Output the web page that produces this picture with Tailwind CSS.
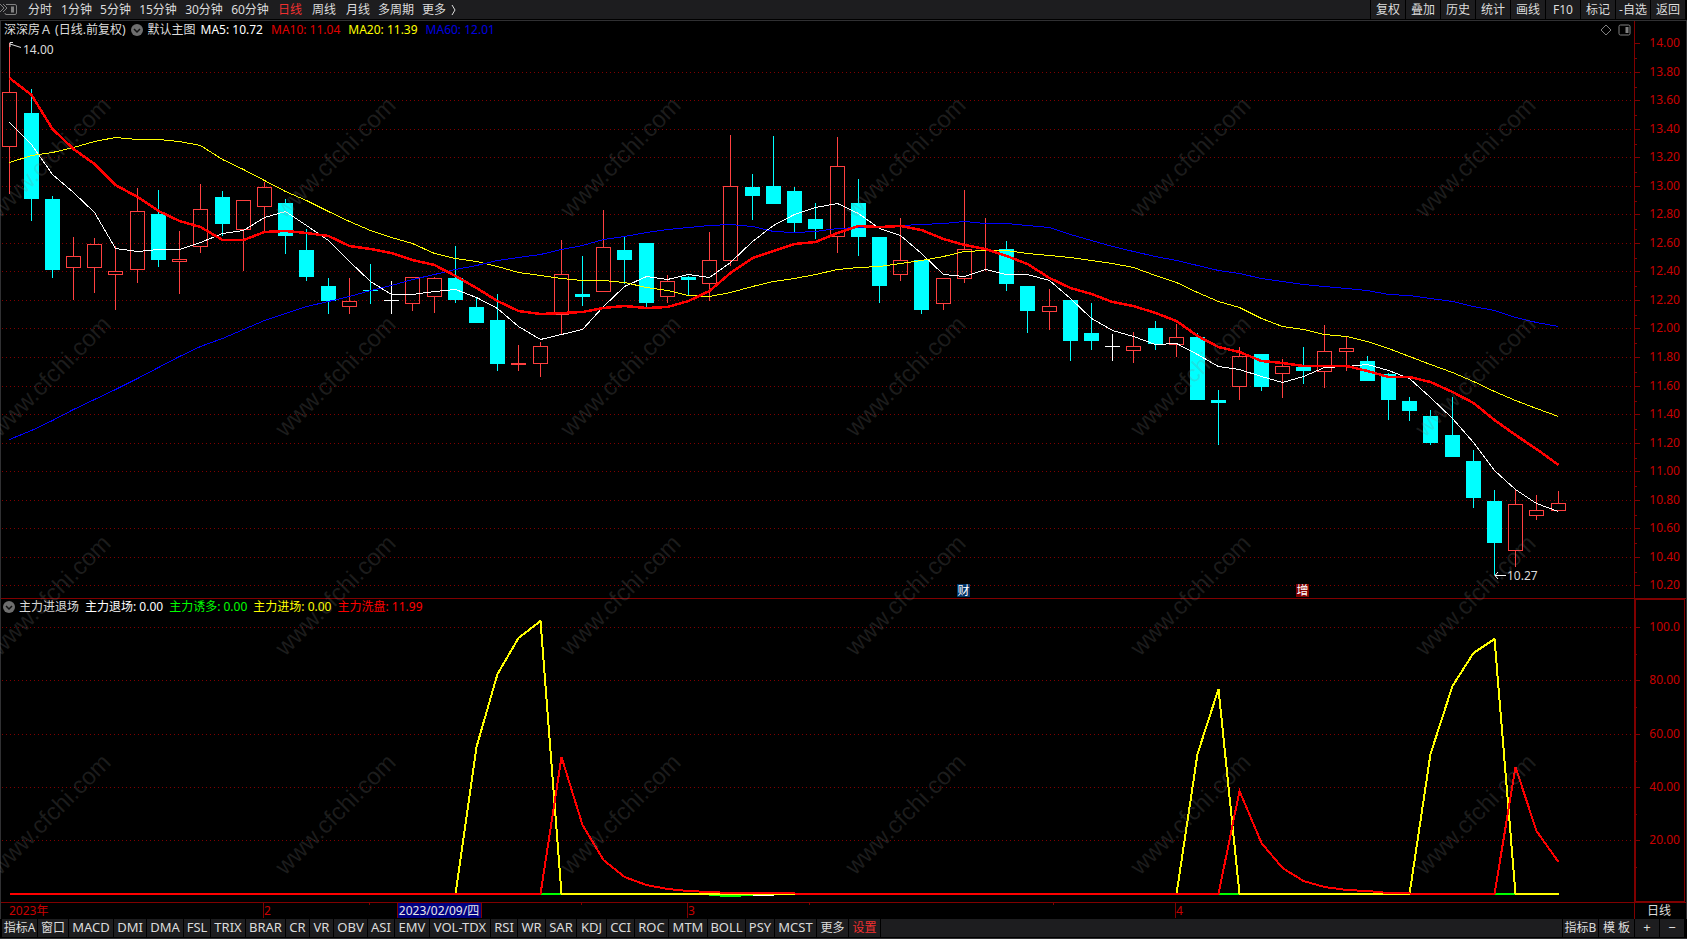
<!DOCTYPE html>
<html lang="zh-CN">
<head>
    <meta charset="UTF-8">
    <meta name="viewport" content="width=device-width, initial-scale=1.0">
    <title>深深房Ａ 日线</title>
    <script src="https://cdn.jsdelivr.net/npm/@tailwindcss/browser@4"></script>
</head>
<body class="relative flex h-screen flex-col overflow-hidden bg-black font-['Noto_Sans','Noto_Sans_CJK_SC',sans-serif] text-xs text-[#dcdcdc]">
    <!-- 顶部工具栏 -->
    <header class="flex h-[21px] shrink-0 justify-between border-b border-[#303032] pb-px">
        <nav class="flex flex-1 items-center bg-[#1d1d1f]">
            <button class="w-[23px]" aria-label="侧栏">
                <svg width="20" height="19" viewBox="0 0 20 19" fill="none" stroke="#808080">
                    <path d="M0 4l4 4-4 4M3 4l4 4-4 4"/>
                    <path d="M6 4.500h9q1.500 0 1.500 1.500v7q0 1.500-1.500 1.500H6q-1 0-1-1.500"/>
                    <path d="M11 6.500h3v6h-3z" fill="#808080" stroke="none"/>
                </svg>
            </button>
            <button class="w-[34px]">分时</button>
            <button class="w-[39px]">1分钟</button>
            <button class="w-[39px]">5分钟</button>
            <button class="w-[46px]">15分钟</button>
            <button class="w-[46px]">30分钟</button>
            <button class="w-[46px]">60分钟</button>
            <button class="w-[34px] text-[#f03030]">日线</button>
            <button class="w-[34px]">周线</button>
            <button class="w-[34px]">月线</button>
            <button class="w-[42px]">多周期</button>
            <button class="w-[34px]">更多</button>
            <svg width="8" height="12" viewBox="0 0 8 12" fill="none" stroke="#dcdcdc"><path d="M1 1l3 5-3 5"/></svg>
        </nav>
        <nav class="mr-[2px] flex gap-px pl-px">
            <button class="w-[34px] bg-[#1d1d1f]">复权</button>
            <button class="w-[34px] bg-[#1d1d1f]">叠加</button>
            <button class="w-[34px] bg-[#1d1d1f]">历史</button>
            <button class="w-[34px] bg-[#1d1d1f]">统计</button>
            <button class="w-[34px] bg-[#1d1d1f]">画线</button>
            <button class="w-[34px] bg-[#1d1d1f]">F10</button>
            <button class="w-[34px] bg-[#1d1d1f]">标记</button>
            <button class="w-[34px] bg-[#1d1d1f]">-自选</button>
            <button class="w-[34px] bg-[#1d1d1f]">返回</button>
        </nav>
    </header>

    <main class="flex min-h-0 flex-1 flex-col border-x border-[#303032]">
        <!-- 主图 -->
        <section class="flex min-h-0 flex-[577_1_0%]">
            <div class="relative min-w-0 flex-1">
                <svg id="price" class="block h-full w-full"></svg>
                <div class="absolute inset-x-0 top-0 flex h-[18px] items-center justify-between pr-[3px] pl-[3px]">
                    <div class="flex items-center gap-[5px] whitespace-nowrap">
                        <span>深深房Ａ (日线.前复权)</span>
                        <button aria-label="主图指标">
                            <svg width="12" height="12" viewBox="0 0 12 12"><circle cx="6" cy="6" r="6" fill="#6e6e6e"/><path d="M3 5l3 3 3-3" fill="none" stroke="#111" stroke-width="1.500"/></svg>
                        </button>
                        <span>默认主图</span>
                        <div class="flex gap-2">
                            <span class="text-white">MA5: 10.72</span>
                            <span class="text-[#e00000]">MA10: 11.04</span>
                            <span class="text-[#ffff00]">MA20: 11.39</span>
                            <span class="text-[#0000e0]">MA60: 12.01</span>
                        </div>
                    </div>
                    <div class="flex items-center gap-[6px]">
                        <svg width="12" height="12" viewBox="0 0 12 12" fill="none" stroke="#808080"><path d="M6 1l5 5-5 5-5-5z"/></svg>
                        <svg width="13" height="12" viewBox="0 0 13 12" fill="none" stroke="#808080"><rect x="1" y="1" width="11" height="10" rx="1.500"/><path d="M7.500 3h3v6h-3z" fill="#808080" stroke="none"/></svg>
                    </div>
                </div>
            </div>
            <svg id="priceAxis" class="block h-full w-[52px] shrink-0 border-l border-[#800000]"></svg>
        </section>

        <!-- 副图 -->
        <section class="flex min-h-0 flex-[303_1_0%] border-t border-[#800000]">
            <div class="relative min-w-0 flex-1">
                <svg id="sub" class="block h-full w-full"></svg>
                <div class="absolute top-0 left-[2px] flex h-4 items-center gap-1 whitespace-nowrap">
                    <button aria-label="副图指标">
                        <svg width="12" height="12" viewBox="0 0 12 12"><circle cx="6" cy="6" r="6" fill="#6e6e6e"/><path d="M3 5l3 3 3-3" fill="none" stroke="#111" stroke-width="1.500"/></svg>
                    </button>
                    <div class="flex gap-[6px]">
                        <span>主力进退场</span>
                        <span class="text-white">主力退场: 0.00</span>
                        <span class="text-[#00ff00]">主力诱多: 0.00</span>
                        <span class="text-[#ffff00]">主力进场: 0.00</span>
                        <span class="text-[#ff0000]">主力洗盘: 11.99</span>
                    </div>
                </div>
            </div>
            <div class="mr-px w-[51px] shrink-0 border-l border-[#800000]">
                <svg id="subAxis" class="block h-full w-full border border-[#800000]"></svg>
            </div>
        </section>

        <!-- 时间轴 -->
        <div class="flex h-[17px] shrink-0 border-t border-[#800000]">
            <svg id="time" class="block h-full min-w-0 flex-1"></svg>
            <div class="flex w-[52px] shrink-0 items-center justify-center border-l border-[#800000] pr-[3px]">日线</div>
        </div>
    </main>

    <!-- 底部指标栏 -->
    <footer class="flex h-5 shrink-0 gap-px border-b border-[#303032] pr-[3px] pb-px pl-[2px] text-[13px]">
        <button class="w-[35px] bg-[#1d1d1f] text-xs">指标A</button>
        <button class="w-[30px] bg-[#1d1d1f] text-xs">窗口</button>
        <button class="w-[44px] bg-[#1d1d1f]">MACD</button>
        <button class="w-[32px] bg-[#1d1d1f]">DMI</button>
        <button class="w-[36px] bg-[#1d1d1f]">DMA</button>
        <button class="w-[26px] bg-[#1d1d1f]">FSL</button>
        <button class="w-[34px] bg-[#1d1d1f]">TRIX</button>
        <button class="w-[39px] bg-[#1d1d1f]">BRAR</button>
        <button class="w-[23px] bg-[#1d1d1f]">CR</button>
        <button class="w-[23px] bg-[#1d1d1f]">VR</button>
        <button class="w-[33px] bg-[#1d1d1f]">OBV</button>
        <button class="w-[26px] bg-[#1d1d1f]">ASI</button>
        <button class="w-[34px] bg-[#1d1d1f]">EMV</button>
        <button class="w-[60px] bg-[#1d1d1f]">VOL-TDX</button>
        <button class="w-[26px] bg-[#1d1d1f]">RSI</button>
        <button class="w-[27px] bg-[#1d1d1f]">WR</button>
        <button class="w-[30px] bg-[#1d1d1f]">SAR</button>
        <button class="w-[29px] bg-[#1d1d1f]">KDJ</button>
        <button class="w-[27px] bg-[#1d1d1f]">CCI</button>
        <button class="w-[33px] bg-[#1d1d1f]">ROC</button>
        <button class="w-[38px] bg-[#1d1d1f]">MTM</button>
        <button class="w-[37px] bg-[#1d1d1f]">BOLL</button>
        <button class="w-[28px] bg-[#1d1d1f]">PSY</button>
        <button class="w-[41px] bg-[#1d1d1f]">MCST</button>
        <button class="w-[31px] bg-[#1d1d1f] text-xs">更多</button>
        <button class="w-[31px] bg-[#1d1d1f] text-xs text-[#f03030]">设置</button>
        <span class="flex-1 bg-[#1d1d1f]"></span>
        <button class="w-[35px] bg-[#1d1d1f] text-xs">指标B</button>
        <button class="w-[35px] bg-[#1d1d1f] text-xs">模 板</button>
        <button class="w-6 bg-[#1d1d1f]">+</button>
        <button class="w-6 bg-[#1d1d1f]">−</button>
    </footer>

    <!-- 水印 -->
    <svg id="watermark" class="pointer-events-none absolute inset-0 h-full w-full" aria-hidden="true"></svg>

    <script>
        // 每根K线: 最高, 实体上沿, 实体下沿, 最低, 类型 (r 阳 / c 阴 / w 平)
        const candles = [
            [43,92,147,194,'r'],[89,113,199,221,'c'],[196,199,270,278,'c'],[237,256,268,300,'r'],[238,244,268,293,'r'],
            [246,271,275,310,'r'],[188,211,270,283,'r'],[190,214,260,267,'c'],[231,259,262,294,'r'],[184,209,247,253,'r'],
            [191,197,224,236,'c'],[200,200,230,271,'r'],[182,187,207,231,'r'],[199,203,236,254,'c'],[229,250,277,281,'c'],
            [278,286,301,314,'c'],[278,301,307,314,'r'],[264,290,291,304,'c'],[281,300,301,314,'w'],[277,277,304,311,'r'],
            [277,278,297,313,'r'],[246,278,300,303,'c'],[297,307,323,323,'c'],[294,320,364,371,'c'],[345,363,365,371,'r'],
            [342,346,364,377,'r'],[240,274,315,334,'r'],[256,294,297,306,'c'],[210,247,292,292,'r'],[237,250,260,284,'c'],
            [243,243,303,307,'c'],[275,281,297,303,'r'],[276,277,280,296,'c'],[232,260,284,301,'r'],[135,186,261,266,'r'],
            [174,187,196,220,'c'],[136,186,204,204,'c'],[187,191,223,232,'c'],[203,219,229,239,'c'],[137,166,237,253,'r'],
            [179,203,237,256,'c'],[237,237,286,303,'c'],[218,260,275,281,'r'],[260,260,310,314,'c'],[278,278,304,310,'r'],
            [190,249,279,283,'r'],[218,250,251,271,'r'],[241,249,284,291,'c'],[286,286,311,333,'c'],[289,306,312,330,'r'],
            [300,300,341,361,'c'],[303,333,341,350,'c'],[334,346,347,361,'w'],[332,346,351,363,'r'],[321,328,344,350,'c'],
            [324,337,345,357,'r'],[333,337,400,400,'c'],[390,400,403,445,'c'],[347,356,387,400,'r'],[354,354,387,391,'c'],
            [359,366,374,398,'r'],[347,367,371,384,'c'],[325,351,372,388,'r'],[337,348,352,371,'r'],[356,361,381,381,'c'],
            [373,374,400,420,'c'],[397,401,411,421,'c'],[410,416,443,445,'c'],[397,435,457,457,'c'],[450,461,498,508,'c'],
            [490,501,543,575,'c'],[490,504,551,567,'r'],[495,510,516,520,'r'],[491,503,511,511,'r']
        ];
        const ma5 = [122,144,174,192,212,248,251,249,249,242,233,230,217,211,225,240,261,281,294,294,291,289,297,308,326,339,334,329,306,286,276,279,274,277,262,241,225,214,207,203,213,228,235,253,274,276,269,274,274,280,298,318,330,336,344,343,354,366,369,376,382,376,367,366,364,370,378,397,418,442,470,489,503,511];
        const ma10 = [78,95,129,149,164,185,197,211,221,227,240,240,232,231,233,236,246,249,253,260,265,276,288,301,311,314,313,312,308,306,308,307,301,291,273,258,251,244,242,233,226,227,226,230,239,245,249,256,264,278,288,294,302,306,313,321,336,347,352,361,363,366,366,366,371,377,377,382,392,403,420,435,449,465];
        const ma20 = [162,155,152,147,141,137,139,139,141,145,159,169,180,191,200,211,221,230,237,243,253,258,261,266,272,275,278,280,280,282,287,290,295,296,292,286,281,278,274,269,267,266,263,260,256,251,250,250,253,255,257,260,263,267,275,282,292,301,307,318,326,329,334,336,341,348,356,364,372,381,391,400,408,416];
        const ma60 = [439,430,420,409,399,389,378,367,356,346,338,329,320,313,306,301,296,290,285,279,274,269,265,260,257,254,249,245,239,236,232,229,227,225,224,226,231,232,231,228,227,226,225,224,223,221,223,223,225,227,234,240,246,251,256,260,265,270,273,278,281,284,286,288,290,294,295,298,301,306,310,317,322,326];

        // 副图线段: [颜色, 起始K线序号, y值...]
        const subLines = [
            ['#00ff00', 25, 894, 894], ['#00ff00', 57, 894, 894], ['#00ff00', 70, 894, 894],
            ['#00ff00', 33, 895, 896, 895], ['#ffffff', 35, 895, 895],
            ['#ffff00', 21, 894, 747, 674, 638, 621, 894, 894, 894, 894, 894, 894, 894, 894, 894, 894, 894, 894],
            ['#ffff00', 55, 894, 754, 689, 894, 894, 894, 894, 894, 894, 894, 894, 894, 754, 686, 653, 639, 894, 894, 894],
            ['#ff0000', 25, 894, 757, 825, 860, 877, 885, 889, 891, 892, 893, 893, 893, 893],
            ['#ff0000', 57, 894, 791, 843, 868, 881, 887, 890, 891, 893, 893],
            ['#ff0000', 70, 894, 767, 831, 862]
        ];
        const flat = [[0, 25], [37, 57], [66, 70]];

        const barX = i => Math.floor(9.96 + 21.207 * i) + 0.5;
        const dark = '#800000', label = '#c80000';
        let sx = 1, sy = 1, top0 = 0;
        const X = x => (x - 1) * sx;
        const Y = y => (y - top0) * sy;
        const line = (x1, y1, x2, y2, c, extra = '') => `<path d="M${x1} ${y1}L${x2} ${y2}" stroke="${c}" ${extra}/>`;
        const poly = (pts, c, w) => `<polyline points="${pts}" fill="none" stroke="${c}" stroke-width="${w}" shape-rendering="crispEdges"/>`;
        const text = (x, y, s, c, anchor = 'start') => `<text x="${x}" y="${y}" fill="${c}" font-size="12" text-anchor="${anchor}">${s}</text>`;

        function setScale(svg, y, h) {
            top0 = y;
            sx = document.getElementById('price').clientWidth / 1633;
            sy = svg.clientHeight / h;
        }

        function drawPrice() {
            const svg = document.getElementById('price');
            setScale(svg, 21, 577);
            let out = '', axis = '';
            for (let k = 0; k < 20; k++) {
                const y = Y(Math.floor(43.5 + 28.545 * k) + 0.5);
                if (k) out += line(1, y, svg.clientWidth, y, dark, 'stroke-dasharray="1 3"');
                axis += line(0, y, 5, y, dark);
                if (k < 19) axis += line(0, y + 15 * sy, 2, y + 15 * sy, dark);
                axis += text(45, y + 3, (14 - k * 0.2).toFixed(2), label, 'end');
            }
            candles.forEach(([h, t, b, l, type], i) => {
                const x = X(barX(i));
                const c = { r: '#ff4040', c: '#00ffff', w: '#ffffff' }[type];
                out += line(x, Y(h), x, Y(t), c) + line(x, Y(b), x, Y(l), c);
                if (type === 'r' && b - t > 2) {
                    out += `<rect x="${x - 7}" y="${Y(t) + 0.5}" width="14" height="${(b - t) * sy - 1}" fill="none" stroke="${c}"/>`;
                } else {
                    out += `<rect x="${x - 7.5}" y="${Y(t)}" width="15" height="${(b - t) * sy}" fill="${c}"/>`;
                }
            });
            const curve = (d, c, w) => poly(d.map((y, i) => X(barX(i)) + ',' + Y(w > 1 ? y : y + 0.5)).join(' '), c, w);
            out += curve(ma5, '#ffffff', 1) + curve(ma20, '#ffff00', 1) + curve(ma60, '#0000ff', 1) + curve(ma10, '#ff0000', 2.5);
            // 最高价 / 最低价标注
            out += `<path d="M${X(21)} ${Y(47.5)}L${X(10)} ${Y(44)}M${X(13)} ${Y(42.5)}H${X(10)}V${Y(47)}" fill="none" stroke="#dcdcdc"/>`;
            out += text(X(23), Y(54), '14.00', '#dcdcdc');
            out += `<path d="M${X(1506)} ${Y(575.5)}H${X(1495)}M${X(1498)} ${Y(572)}L${X(1495)} ${Y(575.5)}L${X(1498)} ${Y(579)}" fill="none" stroke="#fff"/>`;
            out += text(X(1507), Y(580), '10.27', '#dcdcdc');
            // 事件标记
            [[957, '财', '#003366'], [1296, '增', '#800000']].forEach(([x, s, c]) => {
                out += `<rect x="${X(x)}" y="${Y(584)}" width="13" height="13" fill="${c}"/>` + text(X(x) + 0.5, Y(584) + 11, s, '#fff');
            });
            svg.innerHTML = out;
            document.getElementById('priceAxis').innerHTML = axis;
        }

        function drawSub() {
            const svg = document.getElementById('sub');
            setScale(svg, 599, 303);
            let out = '', axis = '';
            [627, 680, 734, 787, 840].forEach((g, k) => {
                const y = Y(g + 0.5);
                out += line(1, y, svg.clientWidth, y, dark, 'stroke-dasharray="1 3"');
                axis += line(0, y - 1, 4, y - 1, dark) + line(0, y + 26, 1, y + 26, dark);
                axis += text(44, y + 2, k ? (100 - k * 20).toFixed(2) : '100.0', label, 'end');
            });
            subLines.forEach(([c, start, ...ys]) => {
                out += poly(ys.map((y, i) => X(barX(start + i)) + ',' + Y(y)).join(' '), c, 2);
            });
            flat.forEach(([a, b]) => {
                out += poly(`${X(barX(a))},${Y(894)} ${X(barX(b))},${Y(894)}`, '#ff0000', 2);
            });
            svg.innerHTML = out;
            document.getElementById('subAxis').innerHTML = axis;
        }

        function drawTime() {
            let out = text(X(9), 12, '2023年', label);
            [[263, '2'], [687, '3'], [1175, '4']].forEach(([x, s]) => {
                out += line(X(x) + 0.5, 0, X(x) + 0.5, 15, dark) + text(X(x) + 1, 12, s, label);
            });
            [369, 581, 809, 1053].forEach(x => out += line(X(x) + 0.5, 0, X(x) + 0.5, 2, dark));
            out += `<rect x="${X(397)}" y="0" width="85" height="15" fill="#000080"/>`;
            out += line(X(397) + 0.5, 0, X(397) + 0.5, 15, dark) + line(X(397) + 84.5, 0, X(397) + 84.5, 15, dark);
            out += text(X(397) + 42, 12, '2023/02/09/四', '#e8e8e8', 'middle');
            document.getElementById('time').innerHTML = out;
        }

        function drawWatermark() {
            let out = '';
            for (let x = 0; x < innerWidth; x += 285) {
                for (let y = 219; y < innerHeight; y += 219) {
                    out += `<text transform="translate(${x} ${y}) rotate(-45)" font-family="Liberation Sans, sans-serif" font-size="24" fill="#808080" fill-opacity="0.22">www.cfchi.com</text>`;
                }
            }
            document.getElementById('watermark').innerHTML = out;
        }

        function draw() {
            drawPrice();
            drawSub();
            drawTime();
            drawWatermark();
        }

        // 尺寸变化时重绘
        const observer = new ResizeObserver(draw);
        observer.observe(document.getElementById('price'));
        observer.observe(document.getElementById('sub'));
    </script>
</body>
</html>
